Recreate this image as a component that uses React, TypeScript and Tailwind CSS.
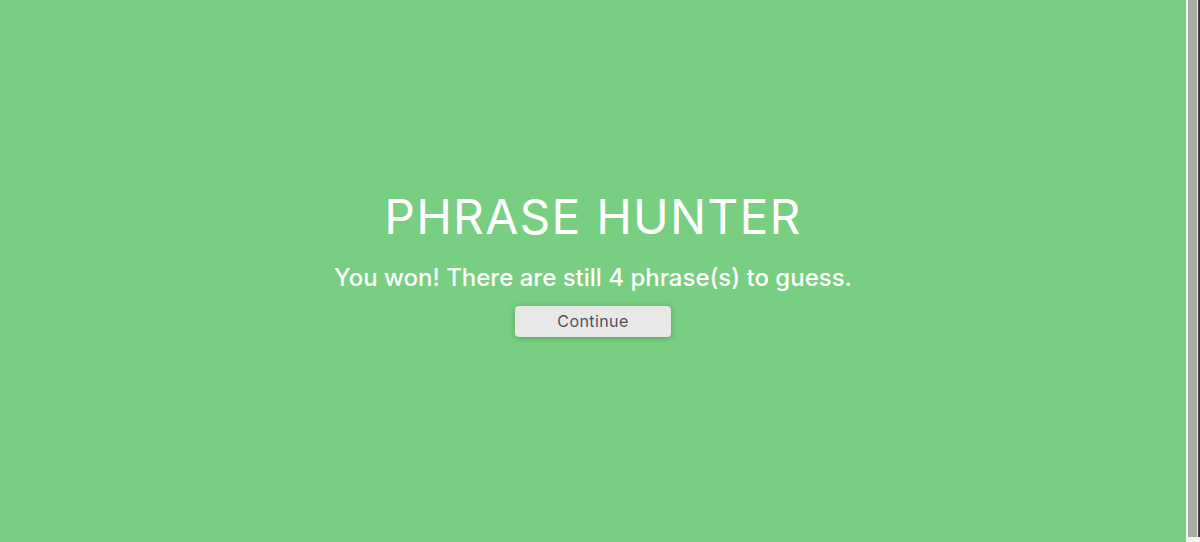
// App.tsx — Phrase Hunter win overlay
export default function App() {
  return (
    <div className="flex h-[542px] w-[1200px] overflow-hidden">
      {/* OVERLAY */}
      <main
        className="flex flex-1 flex-col items-center justify-center bg-[#78cf82] pb-[19px] text-white"
        style={{ fontFamily: 'Inter, "Open Sans", sans-serif' }}
      >
        <h1 className="text-[48px] leading-[60px] font-normal tracking-[1.2px]">PHRASE HUNTER</h1>
        <h2 className="mt-[16px] text-[24px] leading-[30px] font-medium">
          You won! There are still 4 phrase(s) to guess.
        </h2>
        <button className="mt-[13px] h-[31px] w-[156px] rounded-[4px] bg-[#e8e8e8] text-[16px] tracking-[0.4px] text-[#4d5358] shadow-[0_1px_6px_rgba(0,0,0,0.25)]">
          Continue
        </button>
      </main>

      {/* SCROLLBAR STRIP */}
      <div className="flex w-[14px] flex-col bg-white">
        <div className="flex flex-1">
          <div className="w-[1px] bg-[#eef8ef]" />
          <div className="ml-[1px] w-[9px] bg-[#a9a9a9]" />
          <div className="w-[1px] bg-[#f0f0f0]" />
          <div className="w-[2px] bg-[#3a3a3a]" />
        </div>
        <div className="h-[5px] bg-[#f2f2f2]" />
      </div>
    </div>
  )
}
